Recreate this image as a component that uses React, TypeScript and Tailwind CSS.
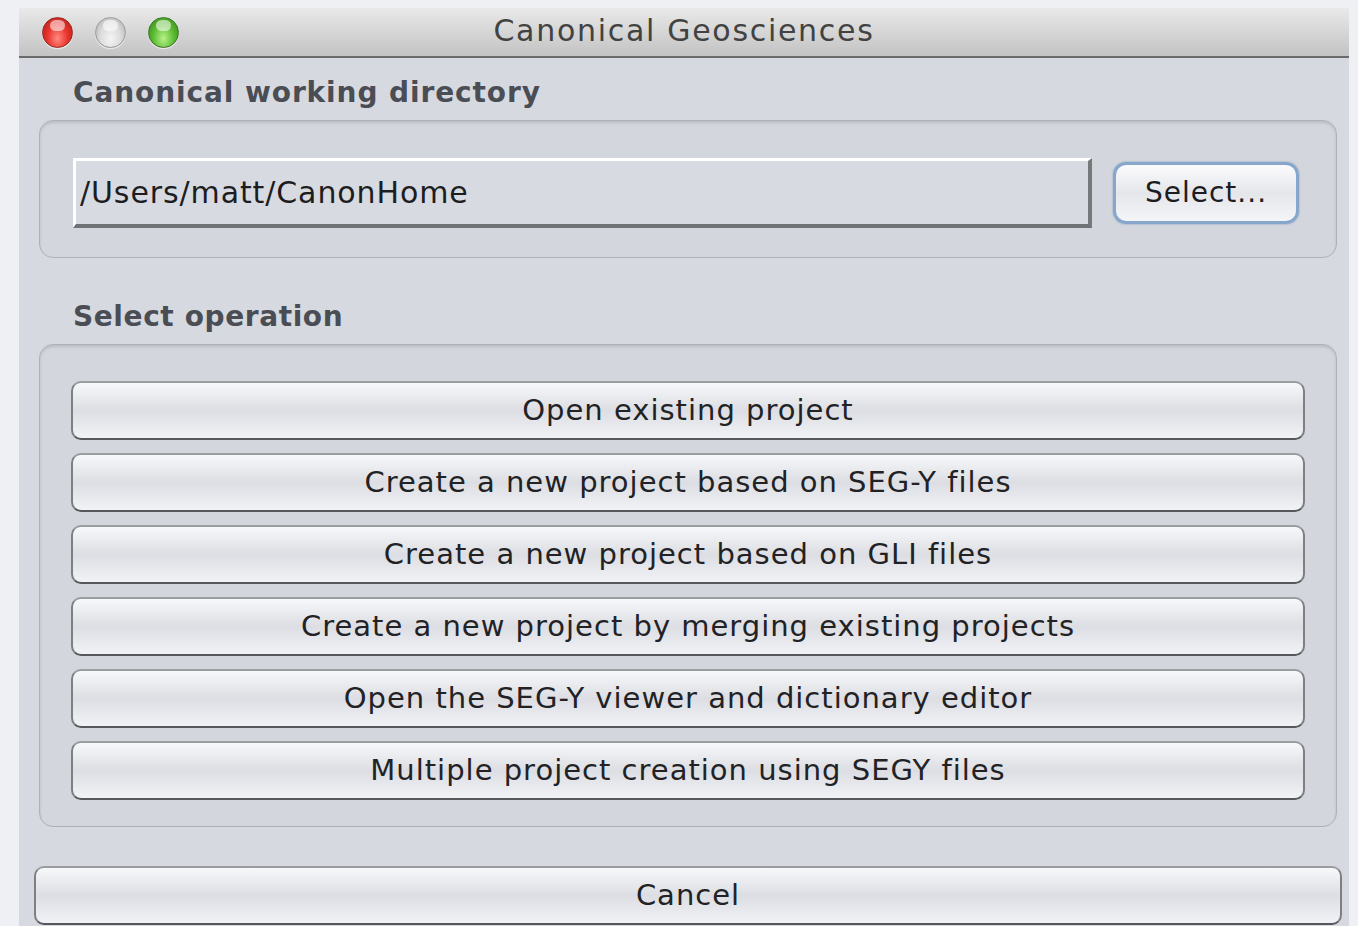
const font = { fontFamily: '"DejaVu Sans", "Liberation Sans", sans-serif' };

const operations = [
  "Open existing project",
  "Create a new project based on SEG-Y files",
  "Create a new project based on GLI files",
  "Create a new project by merging existing projects",
  "Open the SEG-Y viewer and dictionary editor",
  "Multiple project creation using SEGY files",
];

function Light({ tone }: { tone: "red" | "gray" | "green" }) {
  const fill =
    tone === "red"
      ? "bg-radial-[at_50%_70%] from-[#ff8a80] via-[#e8332b] to-[#a51c16] border-[#9a2a24]"
      : tone === "green"
        ? "bg-radial-[at_50%_70%] from-[#b8f28a] via-[#5cbd33] to-[#2f7d17] border-[#3a7a22]"
        : "bg-radial-[at_50%_70%] from-[#f4f4f4] via-[#dcdcdc] to-[#a9a9a9] border-[#9c9c9c]";
  return (
    <span className={`relative block h-[31px] w-[31px] rounded-full border ${fill} shadow-[0_1px_1px_rgba(255,255,255,0.7)]`}>
      <span className="absolute left-[7px] top-[2px] h-[11px] w-[15px] rounded-full bg-white/55" />
    </span>
  );
}

function AquaButton({ label, className = "" }: { label: string; className?: string }) {
  return (
    <button
      className={`flex shrink-0 items-center justify-center rounded-[10px] border-[2px] border-t-[#9a9ca0] border-x-[#7d7f84] border-b-[#55575b] bg-linear-to-b from-[#f7f8fa] via-[#dcdee3] to-[#f1f2f6] text-[29px] tracking-[1px] text-[#222225] ${className}`}
      style={font}
    >
      {label}
    </button>
  );
}

export default function App() {
  return (
    <div className="h-[926px] w-full overflow-hidden bg-[#eef0f3] pl-[19px] pr-[9px] pt-[8px]" style={font}>
      <div className="flex h-[940px] flex-col bg-[#d6d9df]">
        {/* title bar */}
        <div className="grid h-[50px] grid-cols-[1fr_auto_1fr] items-center border-b-[2px] border-[#6a6a6a] bg-linear-to-b from-[#e9e9e9] to-[#c3c3c3]">
          <div className="flex items-center gap-[22px] pl-[23px]">
            <Light tone="red" />
            <Light tone="gray" />
            <Light tone="green" />
          </div>
          <div className="pb-[4px] text-[30px] tracking-[1.7px] text-[#424242]">Canonical Geosciences</div>
          <div />
        </div>

        <div className="flex flex-col pl-[20px] pr-[12px]">
          <div className="pl-[34px] pt-[17px] text-[28px] font-bold leading-[36px] tracking-[0.9px] text-[#4a4d54]">
            Canonical working directory
          </div>
          <div className="mt-[9px] flex h-[138px] items-center gap-[21px] rounded-[14px] border border-[#aeb1b7] bg-[#d3d6dd] pl-[33px] pr-[37px] pt-[8px] shadow-[inset_0_2px_3px_rgba(0,0,0,0.12)]">
            <div className="flex h-[70px] flex-1 items-center border-b-[4px] border-l-[3px] border-r-[4px] border-t-[3px] border-b-[#6f7175] border-l-white border-r-[#76787c] border-t-white bg-[#d7dae1] pl-[4px] text-[30px] tracking-[0.9px] text-[#1d1d1f]">
              /Users/matt/CanonHome
            </div>
            <button
              className="flex h-[62px] w-[186px] items-center justify-center rounded-[13px] border-[3px] border-[#86a6cb] bg-linear-to-b from-[#fbfbfc] via-[#e4e6ea] to-[#f4f5f8] text-[28px] tracking-[1px] text-[#1d1d1f] shadow-[0_0_2px_rgba(70,110,170,0.6)]"
              style={font}
            >
              Select...
            </button>
          </div>

          <div className="pl-[34px] pt-[41px] text-[28px] font-bold leading-[36px] tracking-[0.6px] text-[#4a4d54]">
            Select operation
          </div>
          <div className="mt-[9px] flex h-[483px] flex-col gap-[13px] rounded-[14px] border border-[#aeb1b7] bg-[#d3d6dd] px-[31px] pt-[36px] shadow-[inset_0_2px_3px_rgba(0,0,0,0.12)]">
            {operations.map((op) => (
              <AquaButton key={op} label={op} className="h-[59px] w-full" />
            ))}
          </div>
        </div>

        <div className="pl-[15px] pr-[7px] pt-[39px]">
          <AquaButton label="Cancel" className="h-[59px] w-full" />
        </div>
      </div>
    </div>
  );
}
